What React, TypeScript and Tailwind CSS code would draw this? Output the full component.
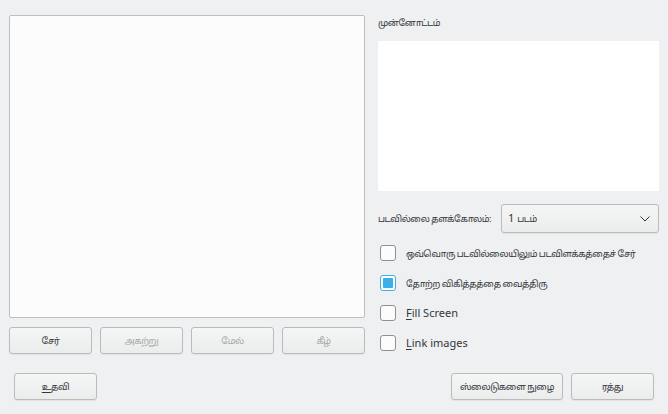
const FONT = "font-['Noto_Sans','Noto_Sans_Tamil','Lohit_Tamil','DejaVu_Sans',sans-serif]";
const TA = "whitespace-nowrap text-[9px] tracking-[-0.45px]";

function Button({
  children,
  disabled = false,
  className = "",
}: {
  children: React.ReactNode;
  disabled?: boolean;
  className?: string;
}) {
  return (
    <button
      disabled={disabled}
      className={`flex h-[27px] items-center justify-center whitespace-nowrap rounded-[3px] border border-[#b9bbbd] bg-[linear-gradient(#f4f5f5,#ebecec)] shadow-[0_1px_1px_rgba(0,0,0,0.06)] ${
        disabled ? "text-[#a5a7a9]" : "text-[#31363b]"
      } ${className}`}
    >
      {children}
    </button>
  );
}

function Checkbox({ checked, children }: { checked?: boolean; children: React.ReactNode }) {
  return (
    <label className="flex h-4 items-center">
      <span
        className={`ml-[2px] flex h-4 w-4 shrink-0 items-center justify-center rounded-[3px] border bg-[#fcfcfc] ${
          checked ? "border-[#3daee9]" : "border-[#8e9193]"
        }`}
      >
        {checked && <span className="h-[10px] w-[10px] rounded-[1px] bg-[#3daee9]" />}
      </span>
      <span className="ml-[10px] whitespace-nowrap text-[11px] text-[#31363b]">{children}</span>
    </label>
  );
}

export default function App() {
  return (
    <div className={`relative h-[414px] w-[668px] overflow-hidden bg-[#eff0f1] ${FONT}`}>
      <div className="flex gap-[13px] pl-[9px] pt-[15px]">
        {/* left: slide list */}
        <div className="flex w-[356px] flex-col">
          <div className="h-[303px] rounded-[2px] border border-[#bcbebf] bg-[#fcfcfc]" />
          <div className="mt-[9px] flex gap-[8px]">
            <Button className="w-[83px]">
              <span className={TA}>சேர்</span>
            </Button>
            <Button className="w-[83px]" disabled>
              <span className={TA}>அகற்று</span>
            </Button>
            <Button className="w-[83px]" disabled>
              <span className={TA}>மேல்</span>
            </Button>
            <Button className="w-[83px]" disabled>
              <span className={TA}>கீழ்</span>
            </Button>
          </div>
        </div>

        {/* right: preview + options */}
        <div className="flex w-[281px] flex-col">
          <div className="flex h-[26px] items-start pt-[1px] text-[#31363b]">
            <span className={TA}>முன்னோட்டம்</span>
          </div>
          <div className="h-[150px] bg-white" />
          <div className="mt-[13px] flex h-[29px] items-center">
            <span className={`w-[123px] text-[#31363b] ${TA}`}>படவில்லை தளக்கோலம்:</span>
            <div className="flex h-[29px] flex-1 items-center justify-between rounded-[3px] border border-[#b9bbbd] bg-[linear-gradient(#f4f5f5,#ebecec)] pl-[6px] pr-[8px] text-[#31363b] shadow-[0_1px_1px_rgba(0,0,0,0.06)]">
              <span className="whitespace-nowrap text-[11px]">
                1 <span className={TA}>படம்</span>
              </span>
              <svg width="10" height="6" viewBox="0 0 10 6" fill="none">
                <path d="M0.5 0.5 L5 5 L9.5 0.5" stroke="#31363b" strokeWidth="1" />
              </svg>
            </div>
          </div>
          <div className="mt-[12px] flex flex-col gap-[14px]">
            <Checkbox>
              <span className={TA}>ஒவ்வொரு படவில்லையிலும் படவிளக்கத்தைச் சேர்</span>
            </Checkbox>
            <Checkbox checked>
              <span className={TA}>தோற்ற விகித்தத்தை வைத்திரு</span>
            </Checkbox>
            <Checkbox>
              <span className="underline underline-offset-2">F</span>ill Screen
            </Checkbox>
            <Checkbox>
              <span className="underline underline-offset-2">L</span>ink images
            </Checkbox>
          </div>
        </div>
      </div>

      {/* bottom buttons */}
      <div className="mt-[19px] flex items-center pl-[14px] pr-[14px]">
        <Button className="w-[83px]">
          <span className={TA}>
            <span className="underline underline-offset-2">உ</span>தவி
          </span>
        </Button>
        <div className="ml-auto flex gap-[8px]">
          <Button className="w-[112px]">
            <span className={TA}>ஸ்லைடுகளை நுழை</span>
          </Button>
          <Button className="w-[83px]">
            <span className={TA}>ரத்து</span>
          </Button>
        </div>
      </div>
    </div>
  );
}
